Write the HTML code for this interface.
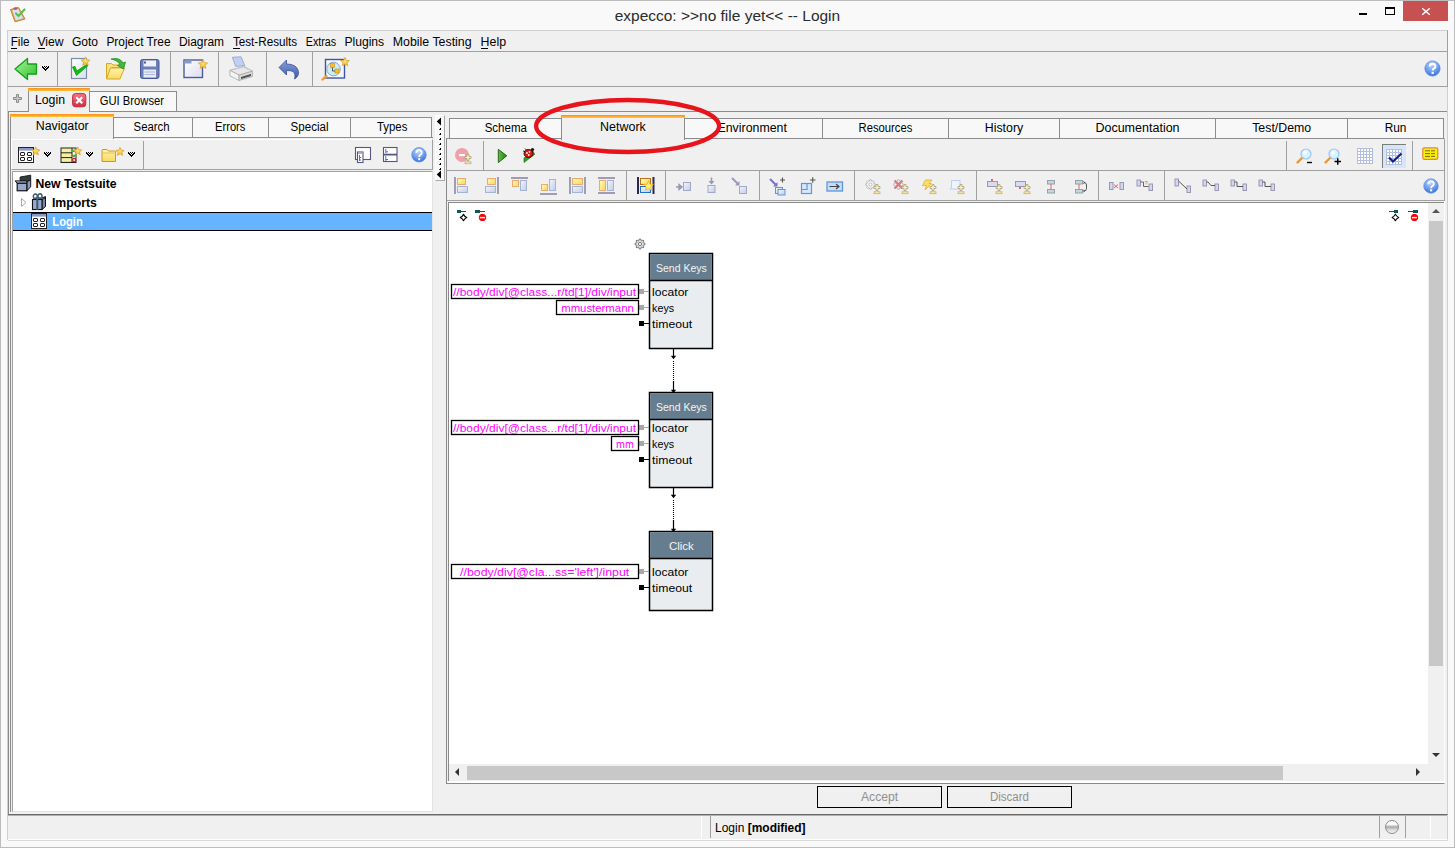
<!DOCTYPE html>
<html><head><meta charset="utf-8"><title>expecco</title>
<style>
*{margin:0;padding:0;box-sizing:border-box}
html,body{width:1455px;height:848px;overflow:hidden;background:#f9f9f9;font-family:"Liberation Sans",sans-serif;color:#000}
.a{position:absolute}
.vs{position:absolute;width:1px;background:#a0a0a0}
.hl{position:absolute;height:1px;background:#a0a0a0}
.tab{position:absolute;background:#f8f8f8;border:1px solid #8c8c8c;border-bottom:none}
.seltab{position:absolute;background:#f0f0f0;border-left:1px solid #8c8c8c;border-right:1px solid #8c8c8c}
.orange{position:absolute;height:3px;background:linear-gradient(#ff8a18,#ffb030 60%,#ffc840)}
.btn{position:absolute;border:1px solid #000;background:#f0f0f0}
svg{position:absolute;overflow:visible}
text{font-family:"Liberation Sans",sans-serif}
</style></head><body>

<svg style="left:0;top:0" width="0" height="0"><defs>
<linearGradient id="gArrow" x1="0" y1="0" x2="1" y2="1"><stop offset="0" stop-color="#aaf5a0"/><stop offset="1" stop-color="#2cc02c"/></linearGradient>
<linearGradient id="gStar" x1="0" y1="0" x2="0" y2="1"><stop offset="0" stop-color="#fff0a0"/><stop offset="1" stop-color="#f0c030"/></linearGradient>
<linearGradient id="gFolder" x1="0" y1="0" x2="0" y2="1"><stop offset="0" stop-color="#fff4b0"/><stop offset="1" stop-color="#f8d860"/></linearGradient>
<linearGradient id="gPage" x1="0" y1="0" x2="1" y2="1"><stop offset="0" stop-color="#ffffff"/><stop offset="1" stop-color="#dcdcf0"/></linearGradient>
<linearGradient id="gBlue" x1="0" y1="0" x2="0" y2="1"><stop offset="0" stop-color="#8aa0d8"/><stop offset="1" stop-color="#3a5ab0"/></linearGradient>
<radialGradient id="gHelp" cx="0.45" cy="0.25" r="0.75"><stop offset="0" stop-color="#c0d8ff"/><stop offset="0.5" stop-color="#7aa8f0"/><stop offset="1" stop-color="#3a70d8"/></radialGradient>
<linearGradient id="gRed" x1="0" y1="0" x2="0" y2="1"><stop offset="0" stop-color="#f07888"/><stop offset="1" stop-color="#d82840"/></linearGradient>
<linearGradient id="gPlay" x1="0" y1="0" x2="1" y2="0"><stop offset="0" stop-color="#60c040"/><stop offset="1" stop-color="#208010"/></linearGradient>
<linearGradient id="gY" x1="0" y1="0" x2="1" y2="1"><stop offset="0" stop-color="#fffcc0"/><stop offset="1" stop-color="#f8d850"/></linearGradient><linearGradient id="gB" x1="0" y1="0" x2="1" y2="1"><stop offset="0" stop-color="#f4f6fc"/><stop offset="1" stop-color="#c4cce4"/></linearGradient></defs></svg>


<div class="a" style="left:0;top:0;width:1455px;height:848px;border:1px solid #bcbcbc"></div>
<div class="a" style="left:1359px;top:13px;width:8px;height:2px;background:#000"></div>
<div class="a" style="left:1385px;top:7px;width:10px;height:8px;border:1px solid #000;border-top-width:2px"></div>
<div class="a" style="left:1403px;top:1px;width:45px;height:20px;background:#c75050"></div>
<svg style="left:1421px;top:7px" width="10" height="9"><path d="M1.2 1.2 L8.8 7.8 M8.8 1.2 L1.2 7.8" stroke="#fff" stroke-width="1.5"/></svg>

<!-- menu bar -->
<div class="a" style="left:7px;top:30px;width:1441px;height:22px;background:#f0f0f0;border:1px solid #cfcfcf;border-bottom:1px solid #a0a0a0;border-right-color:#a0a0a0"></div>
<!-- main toolbar -->
<div class="a" style="left:7px;top:52px;width:1441px;height:35px;background:#f0f0f0;border-left:1px solid #cfcfcf;border-right:1px solid #a0a0a0;border-bottom:1px solid #a0a0a0"></div>
<div class="vs" style="left:57px;top:52px;height:34px"></div>
<div class="vs" style="left:170px;top:52px;height:34px"></div>
<div class="vs" style="left:218px;top:52px;height:34px"></div>
<div class="vs" style="left:266px;top:52px;height:34px"></div>
<div class="vs" style="left:312px;top:52px;height:34px"></div>

<!-- body background -->
<div class="a" style="left:7px;top:87px;width:1441px;height:753px;background:#f0f0f0;border-left:1px solid #cfcfcf;border-right:1px solid #cfcfcf"></div>
<div class="hl" style="left:8px;top:111px;width:1439px;background:#8c8c8c"></div>
<div class="seltab" style="left:28px;top:88px;width:62px;height:24px"></div>
<div class="orange" style="left:28px;top:88px;width:62px"></div>
<div class="tab" style="left:89px;top:91px;width:88px;height:20px"></div>

<!-- LEFT PANEL -->
<div class="a" style="left:8px;top:112px;width:1px;height:703px;background:#8a8a8a"></div>
<div class="a" style="left:10px;top:137px;width:1px;height:675px;background:#8a8a8a"></div>
<div class="hl" style="left:10px;top:137px;width:423px;background:#8c8c8c"></div>
<div class="tab" style="left:113px;top:117px;width:80px;height:20px"></div>
<div class="tab" style="left:192px;top:117px;width:77px;height:20px"></div>
<div class="tab" style="left:268px;top:117px;width:83px;height:20px"></div>
<div class="tab" style="left:350px;top:117px;width:82px;height:20px"></div>
<div class="seltab" style="left:10px;top:114px;width:104px;height:25px"></div>
<div class="orange" style="left:10px;top:114px;width:104px"></div>
<div class="a" style="left:11px;top:139px;width:422px;height:31px;border-top:1px solid #fff;border-left:1px solid #fff;border-right:1px solid #a0a0a0;border-bottom:1px solid #a0a0a0"></div>
<div class="vs" style="left:143px;top:141px;height:28px"></div>
<div class="a" style="left:12px;top:171px;width:421px;height:641px;background:#fff;border-left:1px solid #a0a0a0;border-top:1px solid #a0a0a0;border-right:1px solid #e3e3e3;border-bottom:1px solid #e3e3e3"></div>
<div class="a" style="left:13px;top:212px;width:419px;height:19px;background:#66b3ff;border-top:1px solid #000;border-bottom:1px solid #000"></div>

<!-- splitter -->
<div class="a" style="left:435px;top:115px;width:10px;height:66px;background:#f8f8f8;border-left:1px solid #fff;border-top:1px solid #fff;border-right:1px solid #a8a8a8;border-bottom:1px solid #a8a8a8"></div>

<!-- RIGHT PANEL -->
<div class="tab" style="left:449px;top:118px;width:113px;height:20px"></div>
<div class="tab" style="left:684px;top:118px;width:139px;height:20px"></div>
<div class="tab" style="left:822px;top:118px;width:127px;height:20px"></div>
<div class="tab" style="left:948px;top:118px;width:113px;height:20px"></div>
<div class="tab" style="left:1059px;top:118px;width:158px;height:20px"></div>
<div class="tab" style="left:1215px;top:118px;width:134px;height:20px"></div>
<div class="tab" style="left:1347px;top:118px;width:97px;height:20px"></div>
<div class="a" style="left:446px;top:138px;width:999px;height:646px;border-left:1px solid #8a8a8a;border-top:1px solid #8c8c8c;border-right:1px solid #fcfcfc;border-bottom:1px solid #8a8a8a"></div><div class="a" style="left:1444px;top:139px;width:1px;height:62px;background:#a0a0a0"></div>
<div class="seltab" style="left:561px;top:115px;width:124px;height:25px"></div>
<div class="orange" style="left:561px;top:115px;width:124px"></div>
<div class="hl" style="left:447px;top:170px;width:997px"></div>
<div class="vs" style="left:483px;top:141px;height:29px"></div>
<div class="vs" style="left:1286px;top:141px;height:29px"></div>
<div class="vs" style="left:1412px;top:141px;height:29px"></div>
<div class="hl" style="left:447px;top:200px;width:997px"></div>
<div class="vs" style="left:626px;top:171px;height:29px"></div>
<div class="vs" style="left:665px;top:171px;height:29px"></div>
<div class="vs" style="left:759px;top:171px;height:29px"></div>
<div class="vs" style="left:854px;top:171px;height:29px"></div>
<div class="vs" style="left:976px;top:171px;height:29px"></div>
<div class="vs" style="left:1098px;top:171px;height:29px"></div>
<div class="vs" style="left:1164px;top:171px;height:29px"></div>
<div class="a" style="left:1382px;top:144px;width:24px;height:24px;background:#d4e6f8;border-left:1px solid #7c7c7c;border-top:1px solid #7c7c7c"></div>
<!-- canvas -->
<div class="a" style="left:448px;top:202px;width:996px;height:579px;background:#fff;border-left:1px solid #8a8a8a;border-top:1px solid #8a8a8a"></div>
<div class="a" style="left:1428px;top:203px;width:16px;height:561px;background:#f0f0f0"></div>
<div class="a" style="left:1429px;top:221px;width:14px;height:445px;background:#c8c8c8"></div>
<div class="a" style="left:449px;top:764px;width:979px;height:17px;background:#f0f0f0"></div><div class="a" style="left:447px;top:781px;width:997px;height:2px;background:#fff"></div>
<div class="a" style="left:467px;top:766px;width:816px;height:14px;background:#c8c8c8"></div>
<div class="a" style="left:1428px;top:764px;width:16px;height:17px;background:#f0f0f0"></div>

<div class="btn" style="left:817px;top:786px;width:125px;height:22px"></div>
<div class="btn" style="left:947px;top:786px;width:125px;height:22px"></div>

<!-- status -->
<div class="a" style="left:8px;top:814px;width:1440px;height:26px;background:#f0f0f0;border-top:1px solid #6a6a6a;border-bottom:1px solid #fff;border-right:1px solid #d0d0d0"></div><div class="hl" style="left:8px;top:815px;width:1439px;background:#b0b0b0"></div>
<div class="hl" style="left:8px;top:840px;width:1440px;background:#d8d8d8"></div>
<div class="a" style="left:701px;top:816px;width:1px;height:22px;background:#fff"></div>
<div class="a" style="left:710px;top:816px;width:1px;height:22px;background:#a0a0a0"></div>
<div class="a" style="left:1379px;top:816px;width:1px;height:22px;background:#a0a0a0"></div>
<div class="a" style="left:1405px;top:816px;width:1px;height:22px;background:#a0a0a0"></div>
<div class="a" style="left:1430px;top:816px;width:1px;height:22px;background:#fff"></div>
<div class="a" style="left:1385px;top:820px;width:14px;height:14px;border-radius:50%;border:1px solid #8c8c8c;background:linear-gradient(#fff 0,#fdfdfd 28%,#aaaaaa 50%,#d8d8d8 72%,#f4f4f4 100%)"></div>


<svg style="left:0;top:0" width="1455" height="848">
  <path d="M673.5 349 V358 M673.5 381 V392 M673.5 488 V497 M673.5 520 V531" stroke="#000" stroke-width="1.2"/>
  <path d="M673.5 361 V380 M673.5 500 V519" stroke="#000" stroke-width="1.1" stroke-dasharray="1 1"/>
  <path d="M670.8 355.8 H676.2 L673.5 359.2 Z M670.8 389.8 H676.2 L673.5 393 Z M670.8 494.8 H676.2 L673.5 498.2 Z M670.8 528.8 H676.2 L673.5 532 Z" fill="#000"/>
  <rect x="649.5" y="253.5" width="63" height="95" fill="#e9edf0" stroke="#000" stroke-width="1.5"/>
  <rect x="650.2" y="254.2" width="61.6" height="25.8" fill="#657d8e"/>
  <path d="M649.5 280.5 H712.5" stroke="#000" stroke-width="1.5"/>
  <rect x="649.5" y="392.5" width="63" height="95" fill="#e9edf0" stroke="#000" stroke-width="1.5"/>
  <rect x="650.2" y="393.2" width="61.6" height="25.8" fill="#657d8e"/>
  <path d="M649.5 419.5 H712.5" stroke="#000" stroke-width="1.5"/>
  <rect x="649.5" y="531.5" width="63" height="79" fill="#e9edf0" stroke="#000" stroke-width="1.5"/>
  <rect x="650.2" y="532.2" width="61.6" height="25.8" fill="#657d8e"/>
  <path d="M649.5 558.5 H712.5" stroke="#000" stroke-width="1.5"/>
  <g fill="#a8a8a8">
   <rect x="639" y="289" width="5" height="5"/><rect x="639" y="305" width="5" height="5"/>
   <rect x="639" y="425" width="5" height="5"/><rect x="639" y="441" width="5" height="5"/>
   <rect x="639" y="569" width="5" height="5"/>
  </g>
  <path d="M644 291.5 H649 M644 307.5 H649 M644 427.5 H649 M644 443.5 H649 M644 571.5 H649" stroke="#a8a8a8"/>
  <g fill="#000"><rect x="639" y="321" width="5" height="5"/><rect x="639" y="457" width="5" height="5"/><rect x="639" y="585" width="5" height="5"/></g>
  <path d="M644 323.5 H649 M644 459.5 H649 M644 587.5 H649" stroke="#000"/>
  <g fill="#fff" stroke="#000" stroke-width="1.3">
   <rect x="451.5" y="284.5" width="187" height="14"/>
   <rect x="556.5" y="300.5" width="82" height="14"/>
   <rect x="451.5" y="420.5" width="187" height="14"/>
   <rect x="611.5" y="436.5" width="27" height="14"/>
   <rect x="451.5" y="564.5" width="187" height="14"/>
  </g>
</svg>

<svg style="left:9px;top:6px" width="18" height="18" viewBox="0 0 18 18"><path d="M1.5 3.5 L9.5 1.5 L16 13 L6 15.8 Z" fill="#e8a848" stroke="#c07830" stroke-width="0.9" stroke-linejoin="round"/><path d="M3.3 4.3 L9 2.8 L14.2 12.3 L6.8 14.3 Z" fill="#d0e4f8"/><ellipse cx="6.5" cy="2.6" rx="2" ry="1.4" fill="#c05858"/><path d="M7 7.5 L9.5 10 L15.5 3.5" fill="none" stroke="#5cc050" stroke-width="2.2" stroke-linecap="round"/></svg><svg style="left:14px;top:57px" width="24" height="24" viewBox="0 0 24 24"><path d="M1 12 L13.5 1.5 V7 H22.5 V17 H13.5 V22.5 Z" fill="url(#gArrow)" stroke="#14a014" stroke-width="1.3" stroke-linejoin="round"/></svg><svg style="left:42px;top:65px" width="8" height="7" viewBox="0 0 8 7"><g fill="#000" shape-rendering="crispEdges"><rect x="0" y="1" width="1" height="1"/><rect x="2" y="1" width="1" height="1"/><rect x="4" y="1" width="1" height="1"/><rect x="6" y="1" width="1" height="1"/><rect x="0" y="2" width="1" height="1"/><rect x="1" y="2" width="1" height="1"/><rect x="3" y="2" width="1" height="1"/><rect x="5" y="2" width="1" height="1"/><rect x="6" y="2" width="1" height="1"/><rect x="1" y="3" width="1" height="1"/><rect x="2" y="3" width="1" height="1"/><rect x="4" y="3" width="1" height="1"/><rect x="5" y="3" width="1" height="1"/><rect x="2" y="4" width="1" height="1"/><rect x="3" y="4" width="1" height="1"/><rect x="4" y="4" width="1" height="1"/><rect x="3" y="5" width="1" height="1"/></g></svg><svg style="left:70px;top:56px" width="22" height="24" viewBox="0 0 22 24"><rect x="1.5" y="2.5" width="15" height="20" fill="url(#gPage)" stroke="#7890a8" stroke-width="1.2"/><path d="M2.5 11 L6.5 19.5 L18 9.5 L16.5 8.5 L6.8 15 L5 10.5 Z" fill="#12c012" stroke="#0a9a0a" stroke-width="0.8"/><polygon points="15.50,0.90 16.72,3.83 19.87,4.08 17.47,6.14 18.20,9.22 15.50,7.57 12.80,9.22 13.53,6.14 11.13,4.08 14.28,3.83" fill="url(#gStar)" stroke="#e0a020" stroke-width="0.8" stroke-linejoin="round"/></svg><svg style="left:105px;top:57px" width="23" height="24" viewBox="0 0 23 24"><path d="M1.5 6.5 H6.5 L8 8 H17 L17 10.5 H7 L1.5 22 Z" fill="#f8e080" stroke="#d8a828"/><path d="M1.5 22 L5.5 11 H19.5 L15 22 Z" fill="url(#gFolder)" stroke="#d8a828" stroke-linejoin="round"/><path d="M6 2 Q15 0 18 6 L20.5 5 L18.5 12 L12.5 8.5 L15 7.5 Q13 3.5 6 2 Z" fill="#40b840" stroke="#20901c" stroke-width="0.8"/></svg><svg style="left:140px;top:59px" width="20" height="21" viewBox="0 0 20 21"><rect x="0.5" y="0.5" width="18.5" height="19" rx="2" fill="#6a7eb8" stroke="#4a5a98"/><rect x="3.5" y="1.5" width="12.5" height="6" fill="#eef0fa"/><rect x="4" y="2.5" width="2" height="2" fill="#4a5a98"/><rect x="3.5" y="10.5" width="12.5" height="8" fill="#e8ecf6"/><path d="M4.5 13 H15 M4.5 15.5 H15" stroke="#9aaad0" stroke-width="0.8"/></svg><svg style="left:183px;top:58px" width="26" height="22" viewBox="0 0 26 22"><rect x="1" y="2" width="18.5" height="17.5" fill="url(#gPage)" stroke="#4a5e9e" stroke-width="1.4"/><rect x="1.5" y="2.5" width="7" height="3" fill="#8a9ac8"/><polygon points="20.00,1.70 21.27,4.75 24.57,5.02 22.05,7.17 22.82,10.38 20.00,8.66 17.18,10.38 17.95,7.17 15.43,5.02 18.73,4.75" fill="url(#gStar)" stroke="#e0a020" stroke-width="0.8" stroke-linejoin="round"/></svg><svg style="left:229px;top:56px" width="25" height="26" viewBox="0 0 25 26"><path d="M3.3 1.3 L12 0.8 L15.8 9.5 L6.7 10.4 Z" fill="#c0d0f4" stroke="#8ea0d0" stroke-width="0.8"/><path d="M0.9 14.3 L14.9 10.4 L23.5 15.2 L10 19.1 Z" fill="#e8e8e8" stroke="#a8a8a8" stroke-width="0.8"/><path d="M0.9 14.3 L10 19.1 V24.5 L0.9 19.8 Z" fill="#f4f4f4" stroke="#a8a8a8" stroke-width="0.8"/><path d="M10 19.1 L23.5 15.2 V20.5 L10 24.5 Z" fill="#d8d8d8" stroke="#a8a8a8" stroke-width="0.8"/><path d="M12 21 L22 18 V20 L12 23 Z" fill="#505050"/><path d="M4 13.5 L14.5 11 L19 13.5" fill="none" stroke="#c8c8c8" stroke-width="0.8"/></svg><svg style="left:278px;top:59px" width="22" height="21" viewBox="0 0 22 21"><path d="M1 8.5 L8.5 1 V5 Q19 5 20.5 12.5 Q21 17.5 16.5 20 Q18 15 15 12.5 Q13 11.5 8.5 11.5 V16 Z" fill="url(#gBlue)" stroke="#3a4e98" stroke-width="0.8" stroke-linejoin="round"/></svg><svg style="left:322px;top:57px" width="28" height="24" viewBox="0 0 28 24"><rect x="3.5" y="2.5" width="19" height="18.5" fill="#f4f8fc" stroke="#3e56a0" stroke-width="1.4"/><circle cx="11.5" cy="12" r="6.8" fill="#c8ecf8" stroke="#88a8c8"/><rect x="8.5" y="6.5" width="4" height="4" fill="#f8c020" stroke="#c89010" stroke-width="0.6"/><rect x="13" y="12" width="4" height="4" fill="#f8c020" stroke="#c89010" stroke-width="0.6"/><path d="M10.5 10.5 V14 H13" stroke="#333" fill="none" stroke-width="0.8"/><path d="M0.5 22.5 L4.5 19" stroke="#f0a040" stroke-width="2.4" stroke-linecap="round"/><polygon points="23.00,0.40 24.22,3.33 27.37,3.58 24.97,5.64 25.70,8.72 23.00,7.07 20.30,8.72 21.03,5.64 18.63,3.58 21.78,3.33" fill="url(#gStar)" stroke="#e0a020" stroke-width="0.8" stroke-linejoin="round"/></svg><svg style="left:1424px;top:60px" width="18" height="18" viewBox="0 0 18 18"><circle cx="8.5" cy="8.5" r="7.6" fill="url(#gHelp)" stroke="#5a8ae8" stroke-width="0.8"/><path d="M5.8 6.6 Q5.8 3.8 8.6 3.8 Q11.4 3.8 11.4 6.4 Q11.4 8 9.5 8.8 Q8.7 9.2 8.7 10.6" fill="none" stroke="#fff" stroke-width="1.9"/><rect x="7.6" y="11.8" width="2.2" height="2.2" fill="#fff"/></svg><svg style="left:12px;top:93px" width="12" height="12" viewBox="0 0 12 12"><path d="M4.5 1.5 H6.5 V4.5 H9.5 V6.5 H6.5 V9.5 H4.5 V6.5 H1.5 V4.5 H4.5 Z" fill="#c8c8c8" stroke="#8c8c8c" stroke-width="1" stroke-linejoin="round"/></svg><svg style="left:72px;top:93px" width="15" height="15" viewBox="0 0 15 15"><rect x="0.6" y="0.6" width="13.2" height="13.2" rx="2.8" fill="url(#gRed)" stroke="#c03040" stroke-width="1"/><path d="M4.2 4.2 L10.2 10.2 M10.2 4.2 L4.2 10.2" stroke="#fff" stroke-width="2.3"/></svg><svg style="left:18px;top:147px" width="25" height="17" viewBox="0 0 25 17"><rect x="0.5" y="0.5" width="15" height="15" fill="#fff" stroke="#222"/><rect x="1" y="1" width="14" height="2.6" fill="#8898c8"/><g fill="none" stroke="#222" stroke-width="1"><rect x="2.5" y="5.5" width="4" height="3" rx="0.5"/><rect x="9.5" y="5.5" width="4" height="3" rx="0.5"/><rect x="2.5" y="10.5" width="4" height="3" rx="0.5"/><rect x="9.5" y="10.5" width="4" height="3" rx="0.5"/></g><polygon points="17.70,-0.10 18.86,2.70 21.88,2.94 19.58,4.91 20.29,7.86 17.70,6.28 15.11,7.86 15.82,4.91 13.52,2.94 16.54,2.70" fill="url(#gStar)" stroke="#e0a020" stroke-width="0.8" stroke-linejoin="round"/></svg><svg style="left:44px;top:151px" width="8" height="7" viewBox="0 0 8 7"><g fill="#000" shape-rendering="crispEdges"><rect x="0" y="1" width="1" height="1"/><rect x="2" y="1" width="1" height="1"/><rect x="4" y="1" width="1" height="1"/><rect x="6" y="1" width="1" height="1"/><rect x="0" y="2" width="1" height="1"/><rect x="1" y="2" width="1" height="1"/><rect x="3" y="2" width="1" height="1"/><rect x="5" y="2" width="1" height="1"/><rect x="6" y="2" width="1" height="1"/><rect x="1" y="3" width="1" height="1"/><rect x="2" y="3" width="1" height="1"/><rect x="4" y="3" width="1" height="1"/><rect x="5" y="3" width="1" height="1"/><rect x="2" y="4" width="1" height="1"/><rect x="3" y="4" width="1" height="1"/><rect x="4" y="4" width="1" height="1"/><rect x="3" y="5" width="1" height="1"/></g></svg><svg style="left:60px;top:147px" width="25" height="17" viewBox="0 0 25 17"><rect x="0.5" y="0.5" width="16" height="15.5" fill="#222"/><rect x="1.5" y="1.5" width="10" height="3.8" fill="#f8f0a0"/><rect x="1.5" y="6.3" width="10" height="3.8" fill="#f8f0a0"/><rect x="1.5" y="11.1" width="10" height="3.8" fill="#f8f0a0"/><rect x="12.5" y="1.5" width="3" height="13.4" fill="#f8f8f8"/><path d="M12.5 3 L14 4.5 L16 1.8 M12.5 8 L14 9.5 L16 6.8" stroke="#18b018" fill="none" stroke-width="1.2"/><circle cx="14.2" cy="13" r="1.6" fill="none" stroke="#e02020" stroke-width="1.2"/><polygon points="17.70,-0.10 18.86,2.70 21.88,2.94 19.58,4.91 20.29,7.86 17.70,6.28 15.11,7.86 15.82,4.91 13.52,2.94 16.54,2.70" fill="url(#gStar)" stroke="#e0a020" stroke-width="0.8" stroke-linejoin="round"/></svg><svg style="left:86px;top:151px" width="8" height="7" viewBox="0 0 8 7"><g fill="#000" shape-rendering="crispEdges"><rect x="0" y="1" width="1" height="1"/><rect x="2" y="1" width="1" height="1"/><rect x="4" y="1" width="1" height="1"/><rect x="6" y="1" width="1" height="1"/><rect x="0" y="2" width="1" height="1"/><rect x="1" y="2" width="1" height="1"/><rect x="3" y="2" width="1" height="1"/><rect x="5" y="2" width="1" height="1"/><rect x="6" y="2" width="1" height="1"/><rect x="1" y="3" width="1" height="1"/><rect x="2" y="3" width="1" height="1"/><rect x="4" y="3" width="1" height="1"/><rect x="5" y="3" width="1" height="1"/><rect x="2" y="4" width="1" height="1"/><rect x="3" y="4" width="1" height="1"/><rect x="4" y="4" width="1" height="1"/><rect x="3" y="5" width="1" height="1"/></g></svg><svg style="left:101px;top:147px" width="25" height="16" viewBox="0 0 25 16"><path d="M1 14.5 V3.5 Q1 2.5 2 2.5 H6 L7.5 4 H13.5 Q14.5 4 14.5 5 V14.5 Z" fill="url(#gFolder)" stroke="#c89828"/><path d="M1 6 H14.5" stroke="#e8c050"/><polygon points="19.00,0.40 20.16,3.20 23.18,3.44 20.88,5.41 21.59,8.36 19.00,6.78 16.41,8.36 17.12,5.41 14.82,3.44 17.84,3.20" fill="url(#gStar)" stroke="#e0a020" stroke-width="0.8" stroke-linejoin="round"/></svg><svg style="left:128px;top:151px" width="8" height="7" viewBox="0 0 8 7"><g fill="#000" shape-rendering="crispEdges"><rect x="0" y="1" width="1" height="1"/><rect x="2" y="1" width="1" height="1"/><rect x="4" y="1" width="1" height="1"/><rect x="6" y="1" width="1" height="1"/><rect x="0" y="2" width="1" height="1"/><rect x="1" y="2" width="1" height="1"/><rect x="3" y="2" width="1" height="1"/><rect x="5" y="2" width="1" height="1"/><rect x="6" y="2" width="1" height="1"/><rect x="1" y="3" width="1" height="1"/><rect x="2" y="3" width="1" height="1"/><rect x="4" y="3" width="1" height="1"/><rect x="5" y="3" width="1" height="1"/><rect x="2" y="4" width="1" height="1"/><rect x="3" y="4" width="1" height="1"/><rect x="4" y="4" width="1" height="1"/><rect x="3" y="5" width="1" height="1"/></g></svg><svg style="left:354px;top:146px" width="18" height="18" viewBox="0 0 18 18"><rect x="1.5" y="1.5" width="15" height="12" fill="#fff" stroke="#5a5480" stroke-width="1.1"/><rect x="3.5" y="6" width="5.5" height="10.5" fill="#fff" stroke="#5a5480" stroke-width="1.1"/><rect x="4" y="6.5" width="4.5" height="1.5" fill="#a8b0d0"/><path d="M5.5 9 V15 M5.5 11.5 H7.2 M5.5 14 H7.2" stroke="#3080d0" stroke-width="1"/></svg><svg style="left:382px;top:146px" width="16" height="17" viewBox="0 0 16 17"><rect x="1.5" y="1.5" width="13.5" height="14" fill="#fff" stroke="#5a5480" stroke-width="1.1"/><path d="M1.5 8.6 H15" stroke="#5a5480" stroke-width="1.8"/><path d="M3.8 3 V7 M3.8 5.8 H6 M3.8 10 V15 M3.8 13.5 H6" stroke="#3080d0" stroke-width="1"/></svg><svg style="left:411px;top:147px" width="17" height="17" viewBox="0 0 17 17"><circle cx="8" cy="7.8" r="7.2" fill="url(#gHelp)" stroke="#5a8ae8" stroke-width="0.8"/><path d="M5.4 6 Q5.4 3.2 8.1 3.2 Q10.8 3.2 10.8 5.8 Q10.8 7.3 9 8.1 Q8.2 8.6 8.2 10" fill="none" stroke="#fff" stroke-width="1.8"/><rect x="7.1" y="11.1" width="2.1" height="2.1" fill="#fff"/></svg><svg style="left:14px;top:174px" width="18" height="18" viewBox="0 0 18 18"><path d="M6.1 3 L16.7 1.2 V5.8 L12.8 7.9 L6.1 7.2 Z" fill="#2e3e40" stroke="#151515" stroke-width="0.9" stroke-linejoin="round"/><path d="M12.8 7.9 L16.7 5.8 V12.9 L12.8 16.75 Z" fill="#8a98c0" stroke="#151515" stroke-width="1"/><path d="M1.1 6.9 H12.8 V9.3 H3.2 Z" fill="#b0bce0" stroke="#151515" stroke-width="1" stroke-linejoin="round"/><rect x="3.2" y="9.3" width="9.6" height="7.45" fill="#9aa8d0" stroke="#151515" stroke-width="1.2"/></svg><svg style="left:20px;top:197px" width="8" height="11" viewBox="0 0 8 11"><path d="M1.5 1.5 L6 5.5 L1.5 9.5 Z" fill="#fff" stroke="#a8a8a8" stroke-width="1"/></svg><svg style="left:31px;top:193px" width="16" height="18" viewBox="0 0 16 18"><path d="M11 5 L14.5 3.5 V13.5 L11 16.5 Z" fill="#7a88b0" stroke="#111" stroke-width="1"/><path d="M1.5 6.5 L4.5 5 H14.5 L11 6.5 Z" fill="#b0bce0" stroke="#111" stroke-width="0.8"/><rect x="1.5" y="6.5" width="9.5" height="10" fill="#9aa8d0" stroke="#111" stroke-width="1.1"/><path d="M6.3 6 V17" stroke="#3a5a70" stroke-width="2"/><ellipse cx="4.3" cy="3.2" rx="2" ry="2.2" fill="none" stroke="#3a5a70" stroke-width="1.4"/><ellipse cx="9" cy="3" rx="2" ry="2.2" fill="none" stroke="#3a5a70" stroke-width="1.4"/></svg><svg style="left:31px;top:213px" width="17" height="17" viewBox="0 0 17 17"><rect x="0.5" y="0.5" width="15" height="15" fill="#fff" stroke="#222"/><rect x="1" y="1" width="14" height="2.6" fill="#8898c8"/><g fill="none" stroke="#222" stroke-width="1"><rect x="2.5" y="5.5" width="4" height="3" rx="0.5"/><rect x="9.5" y="5.5" width="4" height="3" rx="0.5"/><rect x="2.5" y="10.5" width="4" height="3" rx="0.5"/><rect x="9.5" y="10.5" width="4" height="3" rx="0.5"/></g></svg><svg style="left:435px;top:115px" width="10" height="66" viewBox="0 0 10 66"><path d="M6 2.5 V10.5 L1.7 6.5 Z M6 55.5 V63.5 L1.7 59.5 Z" fill="#000"/><g fill="#000" shape-rendering="crispEdges"><rect x="5" y="13" width="1" height="2"/><rect x="4" y="14" width="1" height="1" fill="#444"/><rect x="5" y="18" width="1" height="2"/><rect x="4" y="19" width="1" height="1" fill="#444"/><rect x="5" y="23" width="1" height="2"/><rect x="4" y="24" width="1" height="1" fill="#444"/><rect x="5" y="28" width="1" height="2"/><rect x="4" y="29" width="1" height="1" fill="#444"/><rect x="5" y="33" width="1" height="2"/><rect x="4" y="34" width="1" height="1" fill="#444"/><rect x="5" y="38" width="1" height="2"/><rect x="4" y="39" width="1" height="1" fill="#444"/><rect x="5" y="43" width="1" height="2"/><rect x="4" y="44" width="1" height="1" fill="#444"/><rect x="5" y="48" width="1" height="2"/><rect x="4" y="49" width="1" height="1" fill="#444"/><rect x="5" y="53" width="1" height="2"/><rect x="4" y="54" width="1" height="1" fill="#444"/></g></svg><svg style="left:454px;top:147px" width="20" height="18" viewBox="0 0 20 18"><circle cx="8" cy="8" r="7" fill="#f0a0a8"/><rect x="5" y="7" width="6" height="2.2" fill="#fff"/><g transform="translate(10.5,7)"><path d="M2.5 0.5 H4.5 V2.5 H6.5 V4.5 H4.5 V6.5 H2.5 V4.5 H0.5 V2.5 H2.5 Z" fill="#faf2b8" stroke="#a8a080" stroke-width="0.8" stroke-linejoin="round"/><rect x="0.5" y="7.8" width="6" height="2" fill="#f4e8a8" stroke="#a8a080" stroke-width="0.6"/></g></svg><svg style="left:497px;top:148px" width="12" height="16" viewBox="0 0 12 16"><path d="M1.3 1.3 L9.8 7.8 L1.3 14.6 Z" fill="url(#gPlay)" stroke="#1a6010" stroke-width="0.9" stroke-linejoin="round"/></svg><svg style="left:522px;top:147px" width="14" height="17" viewBox="0 0 14 17"><path d="M2 15.5 L12.5 7.5 L11 4 L2 11 Z" fill="#30a020" stroke="#1a6010" stroke-width="0.6"/><ellipse cx="6.5" cy="6.5" rx="4.5" ry="4" fill="#e01818" stroke="#300" stroke-width="0.9"/><circle cx="5" cy="6" r="0.9" fill="#fff"/><circle cx="7.5" cy="4.8" r="0.9" fill="#fff"/><circle cx="6.8" cy="8" r="0.9" fill="#fff"/><circle cx="10.5" cy="2.5" r="1.6" fill="#111"/><path d="M1 4 L3 4.5 M3 1.5 L4.5 3" stroke="#111" stroke-width="0.9"/></svg><svg style="left:1296px;top:147px" width="18" height="18" viewBox="0 0 18 18"><path d="M1.5 15.5 L6 11" stroke="#e89838" stroke-width="2.4" stroke-linecap="round"/><circle cx="10" cy="7" r="5" fill="#d8f2ff" stroke="#9ac8e8" stroke-width="1.2"/><circle cx="9" cy="5.8" r="2" fill="#fff" opacity="0.8"/><path d="M11 15.5 H16" stroke="#000" stroke-width="1.4"/></svg><svg style="left:1324px;top:147px" width="19" height="19" viewBox="0 0 19 19"><path d="M1.5 15.5 L6 11" stroke="#e89838" stroke-width="2.4" stroke-linecap="round"/><circle cx="10" cy="7" r="5" fill="#d8f2ff" stroke="#9ac8e8" stroke-width="1.2"/><circle cx="9" cy="5.8" r="2" fill="#fff" opacity="0.8"/><path d="M10.5 14.5 H17 M13.75 11.3 V17.8" stroke="#000" stroke-width="1.5"/></svg><svg style="left:1357px;top:148px" width="16" height="16" viewBox="0 0 16 16"><g transform="translate(0,0)"><rect x="0" y="0" width="16" height="16" fill="#b4bee0"/><rect x="1" y="1" width="2" height="2" fill="#fff"/><rect x="1" y="4" width="2" height="2" fill="#fff"/><rect x="1" y="7" width="2" height="2" fill="#fff"/><rect x="1" y="10" width="2" height="2" fill="#fff"/><rect x="1" y="13" width="2" height="2" fill="#fff"/><rect x="4" y="1" width="2" height="2" fill="#fff"/><rect x="4" y="4" width="2" height="2" fill="#fff"/><rect x="4" y="7" width="2" height="2" fill="#fff"/><rect x="4" y="10" width="2" height="2" fill="#fff"/><rect x="4" y="13" width="2" height="2" fill="#fff"/><rect x="7" y="1" width="2" height="2" fill="#fff"/><rect x="7" y="4" width="2" height="2" fill="#fff"/><rect x="7" y="7" width="2" height="2" fill="#fff"/><rect x="7" y="10" width="2" height="2" fill="#fff"/><rect x="7" y="13" width="2" height="2" fill="#fff"/><rect x="10" y="1" width="2" height="2" fill="#fff"/><rect x="10" y="4" width="2" height="2" fill="#fff"/><rect x="10" y="7" width="2" height="2" fill="#fff"/><rect x="10" y="10" width="2" height="2" fill="#fff"/><rect x="10" y="13" width="2" height="2" fill="#fff"/><rect x="13" y="1" width="2" height="2" fill="#fff"/><rect x="13" y="4" width="2" height="2" fill="#fff"/><rect x="13" y="7" width="2" height="2" fill="#fff"/><rect x="13" y="10" width="2" height="2" fill="#fff"/><rect x="13" y="13" width="2" height="2" fill="#fff"/></g></svg><svg style="left:1386px;top:149px" width="17" height="17" viewBox="0 0 17 17"><g transform="translate(0,0)"><rect x="0" y="0" width="16" height="16" fill="#b4bee0"/><rect x="1" y="1" width="2" height="2" fill="#fff"/><rect x="1" y="4" width="2" height="2" fill="#fff"/><rect x="1" y="7" width="2" height="2" fill="#fff"/><rect x="1" y="10" width="2" height="2" fill="#fff"/><rect x="1" y="13" width="2" height="2" fill="#fff"/><rect x="4" y="1" width="2" height="2" fill="#fff"/><rect x="4" y="4" width="2" height="2" fill="#fff"/><rect x="4" y="7" width="2" height="2" fill="#fff"/><rect x="4" y="10" width="2" height="2" fill="#fff"/><rect x="4" y="13" width="2" height="2" fill="#fff"/><rect x="7" y="1" width="2" height="2" fill="#fff"/><rect x="7" y="4" width="2" height="2" fill="#fff"/><rect x="7" y="7" width="2" height="2" fill="#fff"/><rect x="7" y="10" width="2" height="2" fill="#fff"/><rect x="7" y="13" width="2" height="2" fill="#fff"/><rect x="10" y="1" width="2" height="2" fill="#fff"/><rect x="10" y="4" width="2" height="2" fill="#fff"/><rect x="10" y="7" width="2" height="2" fill="#fff"/><rect x="10" y="10" width="2" height="2" fill="#fff"/><rect x="10" y="13" width="2" height="2" fill="#fff"/><rect x="13" y="1" width="2" height="2" fill="#fff"/><rect x="13" y="4" width="2" height="2" fill="#fff"/><rect x="13" y="7" width="2" height="2" fill="#fff"/><rect x="13" y="10" width="2" height="2" fill="#fff"/><rect x="13" y="13" width="2" height="2" fill="#fff"/></g><path d="M3 8.5 L7 12.5 L15.5 4.5" fill="none" stroke="#15208a" stroke-width="2.2"/></svg><svg style="left:1422px;top:147px" width="17" height="14" viewBox="0 0 17 14"><rect x="0.8" y="0.8" width="15" height="11.5" rx="1.5" fill="#f8f000" stroke="#e08840" stroke-width="1.2"/><path d="M3 3.8 H13.5 M3 6.6 H13.5 M3 9.4 H13.5" stroke="#6a5a30" stroke-width="0.9" stroke-dasharray="5 1 4 1"/></svg><svg style="left:454px;top:177px" width="18" height="18" viewBox="0 0 18 18"><rect x="0" y="0" width="2" height="17" fill="#a09cb4"/><rect x="3.5" y="1.5" width="8" height="6" fill="url(#gY)" stroke="#e6ac74" stroke-width="1"/><rect x="3.5" y="9.5" width="10" height="6" fill="url(#gB)" stroke="#a4b4d6" stroke-width="1"/></svg><svg style="left:485px;top:177px" width="18" height="18" viewBox="0 0 18 18"><rect x="12" y="0" width="2" height="17" fill="#a09cb4"/><rect x="2.5" y="1.5" width="8" height="6" fill="url(#gY)" stroke="#e6ac74" stroke-width="1"/><rect x="0.5" y="9.5" width="10" height="6" fill="url(#gB)" stroke="#a4b4d6" stroke-width="1"/></svg><svg style="left:511px;top:177px" width="18" height="18" viewBox="0 0 18 18"><rect x="0" y="0" width="17" height="2" fill="#a09cb4"/><rect x="1.5" y="3.5" width="6" height="6" fill="url(#gY)" stroke="#e6ac74" stroke-width="1"/><rect x="9.5" y="3.5" width="6" height="10" fill="url(#gB)" stroke="#a4b4d6" stroke-width="1"/></svg><svg style="left:540px;top:177px" width="18" height="18" viewBox="0 0 18 18"><rect x="0" y="16" width="17" height="2" fill="#a09cb4"/><rect x="1.5" y="7.5" width="6" height="6" fill="url(#gY)" stroke="#e6ac74" stroke-width="1"/><rect x="9.5" y="2.5" width="6" height="11" fill="url(#gB)" stroke="#a4b4d6" stroke-width="1"/></svg><svg style="left:569px;top:177px" width="18" height="18" viewBox="0 0 18 18"><rect x="0" y="0" width="2" height="17" fill="#a09cb4"/><rect x="15" y="0" width="2" height="17" fill="#a09cb4"/><rect x="3.5" y="1.5" width="10" height="6" fill="url(#gY)" stroke="#e6ac74" stroke-width="1"/><rect x="3.5" y="9.5" width="10" height="6" fill="url(#gB)" stroke="#a4b4d6" stroke-width="1"/></svg><svg style="left:598px;top:177px" width="18" height="18" viewBox="0 0 18 18"><rect x="0" y="0" width="17" height="2" fill="#a09cb4"/><rect x="0" y="15" width="17" height="2" fill="#a09cb4"/><rect x="1.5" y="3.5" width="6" height="10" fill="url(#gY)" stroke="#e6ac74" stroke-width="1"/><rect x="9.5" y="3.5" width="6" height="10" fill="url(#gB)" stroke="#a4b4d6" stroke-width="1"/></svg><svg style="left:637px;top:177px" width="18" height="18" viewBox="0 0 18 18"><rect x="0" y="0" width="2" height="17" fill="#2a2850"/><rect x="15.5" y="0" width="2" height="17" fill="#2a2850"/><rect x="3.5" y="1.5" width="10" height="6" fill="url(#gY)" stroke="#c07018" stroke-width="1"/><rect x="3.5" y="9.5" width="10" height="6" fill="url(#gB)" stroke="#2070d0" stroke-width="1"/><polygon points="11.50,3.80 12.88,7.11 16.45,7.39 13.73,9.72 14.56,13.21 11.50,11.34 8.44,13.21 9.27,9.72 6.55,7.39 10.12,7.11" fill="#fff080" stroke="#f0b000" stroke-width="0.8" stroke-linejoin="round"/></svg><svg style="left:675px;top:179px" width="18" height="18" viewBox="0 0 18 18"><path d="M1 8 H6 M4 5.5 L7 8 L4 10.5 Z" stroke="#9898b8" fill="#9898b8" stroke-width="1.4"/><rect x="8.5" y="3.5" width="7" height="8" fill="url(#gB)" stroke="#a0a8c8" stroke-width="1"/></svg><svg style="left:706px;top:177px" width="12" height="18" viewBox="0 0 12 18"><path d="M5.5 0.5 V5" stroke="#9898b8" stroke-width="1.6"/><path d="M2.5 4 H8.5 L5.5 7.5 Z" fill="#9898b8"/><rect x="2.0" y="8.5" width="7" height="7" fill="url(#gB)" stroke="#a0a8c8" stroke-width="1"/></svg><svg style="left:731px;top:177px" width="18" height="18" viewBox="0 0 18 18"><path d="M1 1 L7 7" stroke="#9898b8" stroke-width="1.8"/><path d="M8.5 4 L8.5 8.5 L4 8.5 Z" fill="#9898b8"/><rect x="8.5" y="9.5" width="7" height="7" fill="url(#gB)" stroke="#a0a8c8" stroke-width="1"/></svg><svg style="left:769px;top:177px" width="19" height="19" viewBox="0 0 19 19"><path d="M1 2 L6.5 7.5" stroke="#7a70c8" stroke-width="2"/><path d="M8.5 5 V9.5 H4 Z" fill="#7a70c8"/><path d="M11 3 H16 M13.5 0.5 V5.5" stroke="#555" stroke-width="1.1"/><rect x="6.5" y="10.5" width="7" height="6" fill="url(#gB)" stroke="#5a98e0" stroke-width="1"/><rect x="9.0" y="12.5" width="7" height="5.5" fill="url(#gB)" stroke="#5a98e0" stroke-width="1"/></svg><svg style="left:800px;top:177px" width="18" height="18" viewBox="0 0 18 18"><path d="M10 3 H15.5 M12.75 0.3 V5.7" stroke="#555" stroke-width="1.1"/><rect x="1.5" y="6.5" width="10" height="10" fill="#d8e8fa" stroke="#5a98e0" stroke-width="1.2"/><path d="M1.5 12.5 H7 V6.5" stroke="#5a98e0" fill="none" stroke-width="1.2"/></svg><svg style="left:826px;top:181px" width="18" height="12" viewBox="0 0 18 12"><rect x="1" y="1" width="15.5" height="9" fill="#c8dcf8" stroke="#5a98e0" stroke-width="1.3"/><path d="M3.5 5.5 H12.5 M10 3 L13 5.5 L10 8" stroke="#444" fill="none" stroke-width="1.2"/></svg><svg style="left:865px;top:179px" width="20" height="18" viewBox="0 0 20 18"><polygon points="8.87,4.54 10.25,4.78 10.25,6.22 8.87,6.46 8.56,7.21 9.37,8.35 8.35,9.37 7.21,8.56 6.46,8.87 6.22,10.25 4.78,10.25 4.54,8.87 3.79,8.56 2.65,9.37 1.63,8.35 2.44,7.21 2.13,6.46 0.75,6.22 0.75,4.78 2.13,4.54 2.44,3.79 1.63,2.65 2.65,1.63 3.79,2.44 4.54,2.13 4.78,0.75 6.22,0.75 6.46,2.13 7.21,2.44 8.35,1.63 9.37,2.65 8.56,3.79" fill="#f4f4f4" stroke="#b4b4b4" stroke-width="0.9" stroke-linejoin="round"/><circle cx="5.5" cy="5.5" r="1.5" fill="#fff" stroke="#b4b4b4" stroke-width="0.9"/><g transform="translate(8.5,5)"><path d="M2.5 0.5 H4.5 V2.5 H6.5 V4.5 H4.5 V6.5 H2.5 V4.5 H0.5 V2.5 H2.5 Z" fill="#faf2b8" stroke="#a8a080" stroke-width="0.8" stroke-linejoin="round"/><rect x="0.5" y="7.8" width="6" height="2" fill="#f4e8a8" stroke="#a8a080" stroke-width="0.6"/></g></svg><svg style="left:893px;top:179px" width="20" height="18" viewBox="0 0 20 18"><polygon points="8.87,4.54 10.25,4.78 10.25,6.22 8.87,6.46 8.56,7.21 9.37,8.35 8.35,9.37 7.21,8.56 6.46,8.87 6.22,10.25 4.78,10.25 4.54,8.87 3.79,8.56 2.65,9.37 1.63,8.35 2.44,7.21 2.13,6.46 0.75,6.22 0.75,4.78 2.13,4.54 2.44,3.79 1.63,2.65 2.65,1.63 3.79,2.44 4.54,2.13 4.78,0.75 6.22,0.75 6.46,2.13 7.21,2.44 8.35,1.63 9.37,2.65 8.56,3.79" fill="#f4f4f4" stroke="#b4b4b4" stroke-width="0.9" stroke-linejoin="round"/><circle cx="5.5" cy="5.5" r="1.5" fill="#fff" stroke="#b4b4b4" stroke-width="0.9"/><path d="M1.5 1.5 L9.5 9.5 M9.5 1.5 L1.5 9.5" stroke="#e07880" stroke-width="2.2"/><g transform="translate(8.5,5)"><path d="M2.5 0.5 H4.5 V2.5 H6.5 V4.5 H4.5 V6.5 H2.5 V4.5 H0.5 V2.5 H2.5 Z" fill="#faf2b8" stroke="#a8a080" stroke-width="0.8" stroke-linejoin="round"/><rect x="0.5" y="7.8" width="6" height="2" fill="#f4e8a8" stroke="#a8a080" stroke-width="0.6"/></g></svg><svg style="left:921px;top:179px" width="20" height="18" viewBox="0 0 20 18"><path d="M4.5 1 H11 L8 4.5 H10.5 L4 11 L5.5 6.5 H1.5 Z" fill="#f8e060" stroke="#e0b030" stroke-width="0.8" stroke-linejoin="round"/><g transform="translate(8.5,5)"><path d="M2.5 0.5 H4.5 V2.5 H6.5 V4.5 H4.5 V6.5 H2.5 V4.5 H0.5 V2.5 H2.5 Z" fill="#faf2b8" stroke="#a8a080" stroke-width="0.8" stroke-linejoin="round"/><rect x="0.5" y="7.8" width="6" height="2" fill="#f4e8a8" stroke="#a8a080" stroke-width="0.6"/></g></svg><svg style="left:949px;top:179px" width="20" height="18" viewBox="0 0 20 18"><path d="M2.5 1.5 H11 V10 H1 Q2 9 2.5 8 Z" fill="#f0f4fc" stroke="#b8d0f0" stroke-width="1"/><g transform="translate(8.5,5)"><path d="M2.5 0.5 H4.5 V2.5 H6.5 V4.5 H4.5 V6.5 H2.5 V4.5 H0.5 V2.5 H2.5 Z" fill="#faf2b8" stroke="#a8a080" stroke-width="0.8" stroke-linejoin="round"/><rect x="0.5" y="7.8" width="6" height="2" fill="#f4e8a8" stroke="#a8a080" stroke-width="0.6"/></g></svg><svg style="left:986px;top:178px" width="20" height="18" viewBox="0 0 20 18"><rect x="1.5" y="3.5" width="10" height="5" fill="#d8dcf0" stroke="#9a98b0"/><rect x="5" y="1" width="2" height="2" fill="#e06868"/><g transform="translate(9.5,6)"><path d="M2.5 0.5 H4.5 V2.5 H6.5 V4.5 H4.5 V6.5 H2.5 V4.5 H0.5 V2.5 H2.5 Z" fill="#faf2b8" stroke="#a8a080" stroke-width="0.8" stroke-linejoin="round"/><rect x="0.5" y="7.8" width="6" height="2" fill="#f4e8a8" stroke="#a8a080" stroke-width="0.6"/></g></svg><svg style="left:1014px;top:178px" width="20" height="18" viewBox="0 0 20 18"><rect x="1.5" y="3.5" width="10" height="5" fill="#d8dcf0" stroke="#9a98b0"/><rect x="5" y="9" width="2" height="2" fill="#e06868"/><g transform="translate(9.5,6)"><path d="M2.5 0.5 H4.5 V2.5 H6.5 V4.5 H4.5 V6.5 H2.5 V4.5 H0.5 V2.5 H2.5 Z" fill="#faf2b8" stroke="#a8a080" stroke-width="0.8" stroke-linejoin="round"/><rect x="0.5" y="7.8" width="6" height="2" fill="#f4e8a8" stroke="#a8a080" stroke-width="0.6"/></g></svg><svg style="left:1047px;top:180px" width="10" height="15" viewBox="0 0 10 15"><rect x="0.5" y="0.5" width="7" height="3.5" fill="#c0d8e0" stroke="#98a0a8"/><rect x="0.5" y="9.5" width="7" height="3.5" fill="#c0d8e0" stroke="#98a0a8"/><path d="M4 4 V9.5" stroke="#f06060" stroke-width="1"/></svg><svg style="left:1075px;top:180px" width="14" height="15" viewBox="0 0 14 15"><rect x="0.5" y="0.5" width="7" height="3.5" fill="#c0d8e0" stroke="#98a0a8"/><rect x="0.5" y="9.5" width="7" height="3.5" fill="#c0d8e0" stroke="#98a0a8"/><path d="M4 4 V9.5" stroke="#f06060" stroke-width="1"/><path d="M9 2.5 Q11.5 2.5 11.5 5 V8.5 Q11.5 11 9 11" fill="none" stroke="#555"/><path d="M8 1.5 L10 2.5 L8 3.5 M8 10 L10 11 L8 12" fill="none" stroke="#555" stroke-width="0.8"/></svg><svg style="left:1109px;top:182px" width="16" height="10" viewBox="0 0 16 10"><rect x="0.5" y="0.5" width="3.5" height="7" fill="#d0d8f0" stroke="#9a98b0"/><rect x="11.0" y="0.5" width="3.5" height="7" fill="#d0d8f0" stroke="#9a98b0"/><path d="M5 2.5 L9 6 M9 2.5 L5 6" stroke="#e06868" stroke-width="1"/></svg><svg style="left:1136px;top:179px" width="18" height="14" viewBox="0 0 18 14"><rect x="1.0" y="1.0" width="3.5" height="6" fill="#d0d8f0" stroke="#9a98b0"/><rect x="13.0" y="5.0" width="3.5" height="6.5" fill="#d0d8f0" stroke="#9a98b0"/><path d="M4.5 3 H7.5 V7.5 H12.5" fill="none" stroke="#666"/><text x="8.5" y="6" font-size="6" fill="#e06060">?</text></svg><svg style="left:1174px;top:178px" width="18" height="16" viewBox="0 0 18 16"><rect x="1.0" y="1.0" width="3.5" height="7" fill="#d0d8f0" stroke="#9a98b0"/><rect x="13.0" y="8.0" width="3.5" height="6.5" fill="#d0d8f0" stroke="#9a98b0"/><path d="M4.5 3 L13 11" stroke="#555"/></svg><svg style="left:1202px;top:179px" width="18" height="14" viewBox="0 0 18 14"><rect x="1.0" y="1.0" width="3.5" height="6" fill="#d0d8f0" stroke="#9a98b0"/><rect x="13.0" y="5.0" width="3.5" height="6.5" fill="#d0d8f0" stroke="#9a98b0"/><path d="M4.5 3 H6 L9 6.5 H13" fill="none" stroke="#555"/></svg><svg style="left:1230px;top:179px" width="18" height="14" viewBox="0 0 18 14"><rect x="1.0" y="1.0" width="3.5" height="6" fill="#d0d8f0" stroke="#9a98b0"/><rect x="13.0" y="5.0" width="3.5" height="6.5" fill="#d0d8f0" stroke="#9a98b0"/><path d="M4.5 3 H7 V7.5 H13" fill="none" stroke="#555"/></svg><svg style="left:1258px;top:179px" width="18" height="14" viewBox="0 0 18 14"><rect x="1.0" y="1.0" width="3.5" height="6" fill="#d0d8f0" stroke="#9a98b0"/><rect x="13.0" y="5.0" width="3.5" height="6.5" fill="#d0d8f0" stroke="#9a98b0"/><path d="M4.5 3 H7 V7.5 H13" fill="none" stroke="#555"/></svg><svg style="left:1423px;top:178px" width="17" height="17" viewBox="0 0 17 17"><circle cx="8" cy="8" r="7.2" fill="url(#gHelp)" stroke="#5a8ae8" stroke-width="0.8"/><path d="M5.4 6.2 Q5.4 3.4 8.1 3.4 Q10.8 3.4 10.8 6 Q10.8 7.5 9 8.3 Q8.2 8.8 8.2 10.2" fill="none" stroke="#fff" stroke-width="1.8"/><rect x="7.1" y="11.3" width="2.1" height="2.1" fill="#fff"/></svg><svg style="left:450px;top:204px" width="45" height="22" viewBox="0 0 45 22"><rect x="7" y="6" width="4" height="3" fill="#0a5858"/><rect x="11" y="7" width="5" height="1" fill="#0a5858"/><path d="M13.5 10.2 Q14.4 12.6 16.8 13.5 Q14.4 14.4 13.5 16.8 Q12.6 14.4 10.2 13.5 Q12.6 12.6 13.5 10.2 Z" fill="#fff" stroke="#000" stroke-width="1.1" stroke-linejoin="round"/><rect x="25" y="6" width="5" height="3" fill="#0a5858"/><rect x="30" y="7" width="5" height="1" fill="#0a5858"/><path d="M30.9 9.9 H34.1 L36.1 11.9 V15.1 L34.1 17.1 H30.9 L28.9 15.1 V11.9 Z" fill="#ff0000"/><rect x="29.9" y="12.9" width="5.2" height="1.4" fill="#fff"/></svg><svg style="left:1383px;top:204px" width="42" height="22" viewBox="0 0 42 22"><rect x="11" y="6" width="4" height="3" fill="#0a5858"/><rect x="6" y="7" width="5" height="1" fill="#0a5858"/><path d="M12.4 10.100000000000001 Q13.3 12.5 15.7 13.4 Q13.3 14.3 12.4 16.7 Q11.5 14.3 9.100000000000001 13.4 Q11.5 12.5 12.4 10.100000000000001 Z" fill="#fff" stroke="#000" stroke-width="1.1" stroke-linejoin="round"/><rect x="30" y="6" width="5" height="3" fill="#0a5858"/><rect x="25" y="7" width="5" height="1" fill="#0a5858"/><path d="M29.9 9.9 H33.1 L35.1 11.9 V15.1 L33.1 17.1 H29.9 L27.9 15.1 V11.9 Z" fill="#ff0000"/><rect x="28.9" y="12.9" width="5.2" height="1.4" fill="#fff"/></svg><svg style="left:634px;top:238px" width="12" height="12" viewBox="0 0 12 12"><polygon points="9.46,5.02 10.94,5.25 10.94,6.75 9.46,6.98 9.14,7.75 10.03,8.96 8.96,10.03 7.75,9.14 6.98,9.46 6.75,10.94 5.25,10.94 5.02,9.46 4.25,9.14 3.04,10.03 1.97,8.96 2.86,7.75 2.54,6.98 1.06,6.75 1.06,5.25 2.54,5.02 2.86,4.25 1.97,3.04 3.04,1.97 4.25,2.86 5.02,2.54 5.25,1.06 6.75,1.06 6.98,2.54 7.75,2.86 8.96,1.97 10.03,3.04 9.14,4.25" fill="#e4e4e4" stroke="#6a6a6a" stroke-width="0.9" stroke-linejoin="round"/><circle cx="6" cy="6" r="1.6" fill="#fff" stroke="#6a6a6a" stroke-width="0.9"/></svg><svg style="left:1431px;top:208px" width="10" height="6" viewBox="0 0 10 6"><path d="M1 5 L5 1 L9 5 Z" fill="#555"/></svg><svg style="left:1431px;top:752px" width="10" height="6" viewBox="0 0 10 6"><path d="M1 1 L5 5 L9 1 Z" fill="#333"/></svg><svg style="left:454px;top:767px" width="6" height="10" viewBox="0 0 6 10"><path d="M5 1 L1 5 L5 9 Z" fill="#333"/></svg><svg style="left:1415px;top:767px" width="6" height="10" viewBox="0 0 6 10"><path d="M1 1 L5 5 L1 9 Z" fill="#333"/></svg>
<svg style="left:0;top:0" width="1455" height="848">
<text x="614.7" y="20.5" font-size="14" fill="#2b2b2b" font-weight="normal" textLength="225.5" lengthAdjust="spacingAndGlyphs">expecco: &gt;&gt;no file yet&lt;&lt; -- Login</text>
<text x="10.700000000000001" y="46" font-size="12" fill="#000" font-weight="normal" textLength="18.9" lengthAdjust="spacingAndGlyphs">File</text>
<text x="37.4" y="46" font-size="12" fill="#000" font-weight="normal" textLength="26.2" lengthAdjust="spacingAndGlyphs">View</text>
<text x="71.9" y="46" font-size="12" fill="#000" font-weight="normal" textLength="26.2" lengthAdjust="spacingAndGlyphs">Goto</text>
<text x="106.4" y="46" font-size="12" fill="#000" font-weight="normal" textLength="64.2" lengthAdjust="spacingAndGlyphs">Project Tree</text>
<text x="178.9" y="46" font-size="12" fill="#000" font-weight="normal" textLength="45.2" lengthAdjust="spacingAndGlyphs">Diagram</text>
<text x="232.9" y="46" font-size="12" fill="#000" font-weight="normal" textLength="64.3" lengthAdjust="spacingAndGlyphs">Test-Results</text>
<text x="305.79999999999995" y="46" font-size="12" fill="#000" font-weight="normal" textLength="30.4" lengthAdjust="spacingAndGlyphs">Extras</text>
<text x="344.4" y="46" font-size="12" fill="#000" font-weight="normal" textLength="39.8" lengthAdjust="spacingAndGlyphs">Plugins</text>
<text x="392.79999999999995" y="46" font-size="12" fill="#000" font-weight="normal" textLength="78.8" lengthAdjust="spacingAndGlyphs">Mobile Testing</text>
<text x="480.59999999999997" y="46" font-size="12" fill="#000" font-weight="normal" textLength="25.5" lengthAdjust="spacingAndGlyphs">Help</text>
<text x="34.9" y="104" font-size="12" fill="#000" font-weight="normal" textLength="30.1" lengthAdjust="spacingAndGlyphs">Login</text>
<text x="99.8" y="104.5" font-size="12" fill="#000" font-weight="normal" textLength="64.2" lengthAdjust="spacingAndGlyphs">GUI Browser</text>
<text x="35.7" y="130" font-size="12" fill="#000" font-weight="normal" textLength="53.0" lengthAdjust="spacingAndGlyphs">Navigator</text>
<text x="133.6" y="131" font-size="12" fill="#000" font-weight="normal" textLength="36.0" lengthAdjust="spacingAndGlyphs">Search</text>
<text x="215.1" y="131" font-size="12" fill="#000" font-weight="normal" textLength="30.2" lengthAdjust="spacingAndGlyphs">Errors</text>
<text x="290.6" y="131" font-size="12" fill="#000" font-weight="normal" textLength="37.9" lengthAdjust="spacingAndGlyphs">Special</text>
<text x="377.0" y="131" font-size="12" fill="#000" font-weight="normal" textLength="30.4" lengthAdjust="spacingAndGlyphs">Types</text>
<text x="484.7" y="132" font-size="12" fill="#000" font-weight="normal" textLength="42.2" lengthAdjust="spacingAndGlyphs">Schema</text>
<text x="600.1" y="131" font-size="12" fill="#000" font-weight="normal" textLength="45.7" lengthAdjust="spacingAndGlyphs">Network</text>
<text x="717.5" y="132" font-size="12" fill="#000" font-weight="normal" textLength="69.4" lengthAdjust="spacingAndGlyphs">Environment</text>
<text x="858.6" y="132" font-size="12" fill="#000" font-weight="normal" textLength="53.7" lengthAdjust="spacingAndGlyphs">Resources</text>
<text x="984.8" y="132" font-size="12" fill="#000" font-weight="normal" textLength="38.4" lengthAdjust="spacingAndGlyphs">History</text>
<text x="1095.4" y="132" font-size="12" fill="#000" font-weight="normal" textLength="84.2" lengthAdjust="spacingAndGlyphs">Documentation</text>
<text x="1252.2" y="132" font-size="12" fill="#000" font-weight="normal" textLength="59.0" lengthAdjust="spacingAndGlyphs">Test/Demo</text>
<text x="1384.7" y="132" font-size="12" fill="#000" font-weight="normal" textLength="21.7" lengthAdjust="spacingAndGlyphs">Run</text>
<text x="35.4" y="188" font-size="12.5" fill="#000" font-weight="bold" textLength="81.2" lengthAdjust="spacingAndGlyphs">New Testsuite</text>
<text x="51.9" y="207" font-size="12.5" fill="#000" font-weight="bold" textLength="44.9" lengthAdjust="spacingAndGlyphs">Imports</text>
<text x="52.3" y="226" font-size="12.5" fill="#fff" font-weight="bold" textLength="30.5" lengthAdjust="spacingAndGlyphs">Login</text>
<text x="656.0" y="272" font-size="11" fill="#f4f4f4" font-weight="normal" textLength="50.8" lengthAdjust="spacingAndGlyphs">Send Keys</text>
<text x="656.0" y="411" font-size="11" fill="#f4f4f4" font-weight="normal" textLength="50.8" lengthAdjust="spacingAndGlyphs">Send Keys</text>
<text x="668.9" y="550" font-size="11" fill="#f4f4f4" font-weight="normal" textLength="24.8" lengthAdjust="spacingAndGlyphs">Click</text>
<text x="652.1" y="296" font-size="11" fill="#000" font-weight="normal" textLength="36.3" lengthAdjust="spacingAndGlyphs">locator</text>
<text x="652.1" y="312" font-size="11" fill="#000" font-weight="normal" textLength="22.0" lengthAdjust="spacingAndGlyphs">keys</text>
<text x="652.1" y="328" font-size="11" fill="#000" font-weight="normal" textLength="40.1" lengthAdjust="spacingAndGlyphs">timeout</text>
<text x="652.1" y="432" font-size="11" fill="#000" font-weight="normal" textLength="36.3" lengthAdjust="spacingAndGlyphs">locator</text>
<text x="652.1" y="448" font-size="11" fill="#000" font-weight="normal" textLength="22.0" lengthAdjust="spacingAndGlyphs">keys</text>
<text x="652.1" y="464" font-size="11" fill="#000" font-weight="normal" textLength="40.1" lengthAdjust="spacingAndGlyphs">timeout</text>
<text x="652.1" y="576" font-size="11" fill="#000" font-weight="normal" textLength="36.3" lengthAdjust="spacingAndGlyphs">locator</text>
<text x="652.1" y="592" font-size="11" fill="#000" font-weight="normal" textLength="40.1" lengthAdjust="spacingAndGlyphs">timeout</text>
<text x="453.0" y="296" font-size="11" fill="#ff00ff" font-weight="normal" textLength="183.0" lengthAdjust="spacingAndGlyphs">//body/div[@class...r/td[1]/div/input</text>
<text x="561.2" y="312" font-size="11" fill="#ff00ff" font-weight="normal" textLength="72.6" lengthAdjust="spacingAndGlyphs">mmustermann</text>
<text x="453.0" y="432" font-size="11" fill="#ff00ff" font-weight="normal" textLength="183.0" lengthAdjust="spacingAndGlyphs">//body/div[@class...r/td[1]/div/input</text>
<text x="616.1" y="448" font-size="11" fill="#ff00ff" font-weight="normal" textLength="17.8" lengthAdjust="spacingAndGlyphs">mm</text>
<text x="460.1" y="576" font-size="11" fill="#ff00ff" font-weight="normal" textLength="169.1" lengthAdjust="spacingAndGlyphs">//body/div[@cla...ss=&#x27;left&#x27;]/input</text>
<text x="861.0" y="801" font-size="12" fill="#8f8f8f" font-weight="normal" textLength="37.1" lengthAdjust="spacingAndGlyphs">Accept</text>
<text x="990.0" y="801" font-size="12" fill="#8f8f8f" font-weight="normal" textLength="39.0" lengthAdjust="spacingAndGlyphs">Discard</text>
</svg>
<svg style="left:0;top:0" width="1455" height="848"><text x="715" y="832" font-size="12" textLength="90.6" lengthAdjust="spacingAndGlyphs">Login <tspan font-weight="bold">[modified]</tspan></text></svg>
<div class="a" style="left:11px;top:48px;width:6px;height:1px;background:#000"></div><div class="a" style="left:38px;top:48px;width:7px;height:1px;background:#000"></div><div class="a" style="left:233px;top:48px;width:7px;height:1px;background:#000"></div><div class="a" style="left:481px;top:48px;width:7px;height:1px;background:#000"></div>
<svg style="left:530px;top:94px" width="196" height="64"><ellipse cx="97.6" cy="32" rx="91.5" ry="26" fill="none" stroke="#e8141c" stroke-width="4.3"/></svg>
</body></html>
